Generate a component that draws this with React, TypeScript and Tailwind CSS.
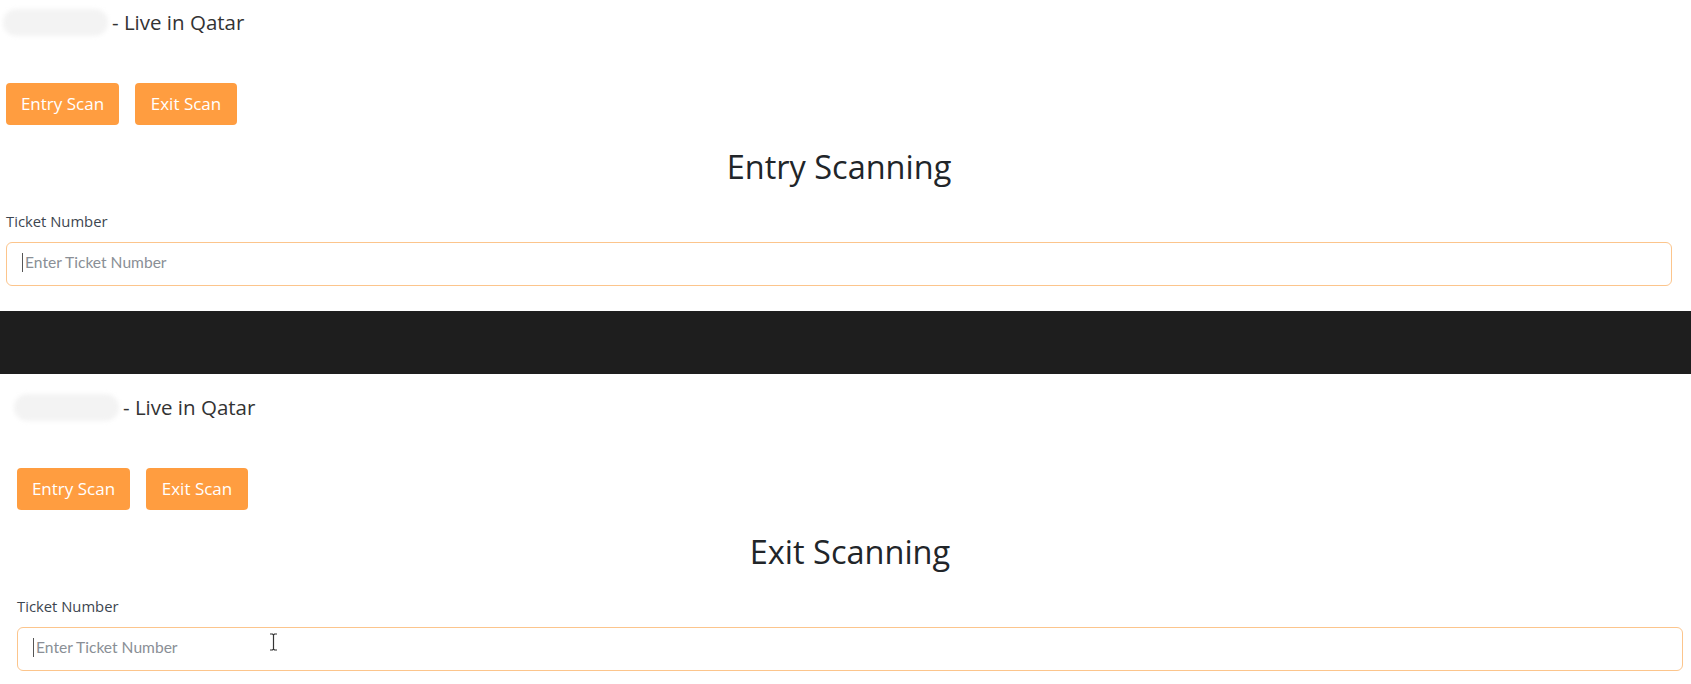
import React from 'react';

const font = { fontFamily: '"Open Sans", "Noto Sans", sans-serif' };
const inputFont = { fontFamily: 'Lato, "Noto Sans", sans-serif' };

function IBeam() {
  return (
    <svg width="9" height="18" viewBox="0 0 9 18" className="absolute left-[252px] top-[6px]">
      <path d="M1 1h2.5L4.5 2L5.5 1H8M1 17h2.5l1-1l1 1H8M4.5 2v14" fill="none" stroke="#333" strokeWidth="1.2" />
    </svg>
  );
}

interface PanelProps {
  heading: string;
  shifted?: boolean;
}

function Panel({ heading, shifted = false }: PanelProps) {
  return (
    <div
      className={
        shifted
          ? 'h-[310px] overflow-hidden bg-white pt-[21px] pl-[17px] pr-[8px]'
          : 'h-[311px] overflow-hidden bg-white pt-[10px] pl-[6px] pr-[19px]'
      }
      style={font}
    >
      <div className="flex h-[24px] items-center">
        <div className="-ml-[3px] mr-[4px] h-[27px] w-[105px] rounded-full bg-[#f3f3f3] blur-[2px]" />
        <span className="text-[20.5px] leading-[24px] text-[#333]">- Live in Qatar</span>
      </div>

      <div className="mt-[49px] flex gap-[16px]">
        <button className="h-[42px] w-[113px] rounded-[4px] bg-[#ff9d40] text-[17px] text-white">
          Entry Scan
        </button>
        <button className="h-[42px] w-[102px] rounded-[4px] bg-[#ff9d40] text-[17px] text-white">
          Exit Scan
        </button>
      </div>

      <h2 className="mt-[24px] text-center text-[32.5px] leading-[36px] text-[#212529]">{heading}</h2>

      <label className="mt-[26px] block text-[14.8px] leading-[20px] text-[#3d4650]">Ticket Number</label>
      <div className="relative mt-[11px]">
        <input
          readOnly
          placeholder="Enter Ticket Number"
          className="h-[44px] w-full rounded-[6px] border border-[#fcc58c] bg-white pb-[4px] pl-[18px] text-[15.6px] text-[#333] placeholder-[#8a8f96] outline-none"
          style={inputFont}
        />
        <span className="absolute left-[16px] top-[11px] h-[19px] w-px bg-[#555]" />
        {shifted && <IBeam />}
      </div>
    </div>
  );
}

export default function App() {
  return (
    <div className="h-[684px] w-full overflow-hidden bg-white">
      <Panel heading="Entry Scanning" />
      <div className="h-[63px] bg-[#1e1e1e]" />
      <Panel heading="Exit Scanning" shifted />
    </div>
  );
}
